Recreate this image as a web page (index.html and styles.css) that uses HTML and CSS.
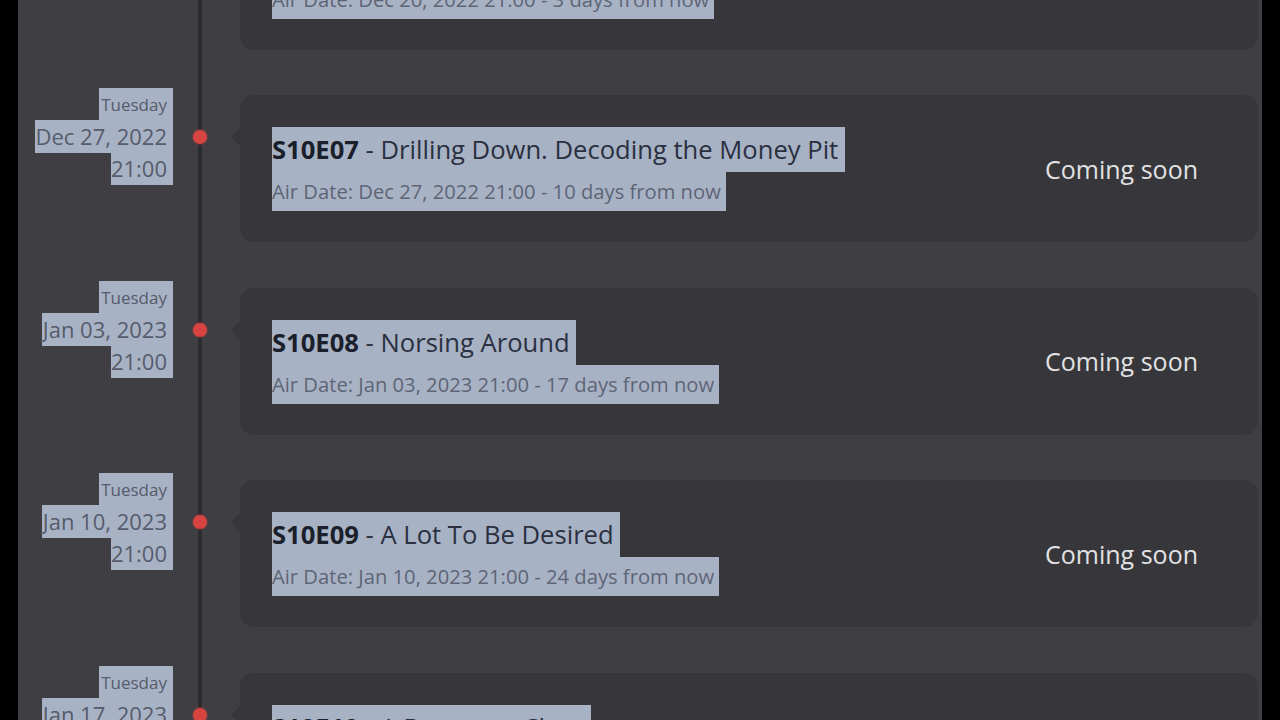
FILE: index.html
```html
<!DOCTYPE html>
<html>
<head>
<meta charset="utf-8">
<link rel="stylesheet" href="styles.css">
</head>
<body>
<div class="page">
  <div class="list">
    <div class="row">
      <div class="when">
        <span class="hl day">Tuesday</span>
        <span class="hl date">Dec 20, 2022</span>
        <span class="hl time">21:00</span>
      </div>
      <div class="axis"><span class="dot"></span></div>
      <div class="card">
        <div class="info">
          <div class="hl title"><b>S10E06</b> - The Dust Settles </div>
          <div class="hl air">Air Date: Dec 20, 2022 21:00 - 3 days from now</div>
        </div>
        <div class="status">Coming soon</div>
      </div>
    </div>
    <div class="row">
      <div class="when">
        <span class="hl day">Tuesday</span>
        <span class="hl date">Dec 27, 2022</span>
        <span class="hl time">21:00</span>
      </div>
      <div class="axis"><span class="dot"></span></div>
      <div class="card">
        <div class="info">
          <div class="hl title"><b>S10E07</b> - Drilling Down. Decoding the Money Pit </div>
          <div class="hl air">Air Date: Dec 27, 2022 21:00 - 10 days from now</div>
        </div>
        <div class="status">Coming soon</div>
      </div>
    </div>
    <div class="row">
      <div class="when">
        <span class="hl day">Tuesday</span>
        <span class="hl date">Jan 03, 2023</span>
        <span class="hl time">21:00</span>
      </div>
      <div class="axis"><span class="dot"></span></div>
      <div class="card">
        <div class="info">
          <div class="hl title"><b>S10E08</b> - Norsing Around </div>
          <div class="hl air">Air Date: Jan 03, 2023 21:00 - 17 days from now</div>
        </div>
        <div class="status">Coming soon</div>
      </div>
    </div>
    <div class="row">
      <div class="when">
        <span class="hl day">Tuesday</span>
        <span class="hl date">Jan 10, 2023</span>
        <span class="hl time">21:00</span>
      </div>
      <div class="axis"><span class="dot"></span></div>
      <div class="card">
        <div class="info">
          <div class="hl title"><b>S10E09</b> - A Lot To Be Desired </div>
          <div class="hl air">Air Date: Jan 10, 2023 21:00 - 24 days from now</div>
        </div>
        <div class="status">Coming soon</div>
      </div>
    </div>
    <div class="row">
      <div class="when">
        <span class="hl day">Tuesday</span>
        <span class="hl date">Jan 17, 2023</span>
        <span class="hl time">21:00</span>
      </div>
      <div class="axis"><span class="dot"></span></div>
      <div class="card">
        <div class="info">
          <div class="hl title"><b>S10E10</b> - A Dream to Clear </div>
          <div class="hl air">Air Date: Jan 17, 2023 21:00 - 31 days from now</div>
        </div>
        <div class="status">Coming soon</div>
      </div>
    </div>
  </div>
</div>
</body>
</html>
```

FILE: styles.css
```css
html, body {
  margin: 0;
  padding: 0;
  background: #000;
}
body {
  font-family: "Open Sans", "Noto Sans", sans-serif;
  width: 1280px;
  height: 720px;
  overflow: hidden;
}
.page {
  margin: 0 18px;
  height: 720px;
  overflow: hidden;
  background: #3f3e43;
  padding-right: 4px;
}
.list {
  margin-top: -97.5px;
}
.row {
  display: grid;
  grid-template-columns: 152px 54px 1fr;
  padding-left: 3px;
}
.when {
  display: flex;
  flex-direction: column;
  align-items: flex-end;
  margin-top: -7px;
}
.hl {
  background: #a8b2c5;
}
.when .hl {
  display: block;
  padding-right: 6px;
  color: #565c6b;
}
.day {
  font-size: 17px;
  height: 32px;
  line-height: 34px;
  padding-left: 2px;
}
.date {
  font-size: 22px;
  height: 33px;
  line-height: 33px;
  padding-left: 1px;
}
.time {
  font-size: 22px;
  height: 32px;
  line-height: 31px;
}
.axis {
  display: flex;
  justify-content: center;
  align-items: flex-start;
  background: linear-gradient(#2b2a2f, #2b2a2f) center / 4px 100% no-repeat;
}
.dot {
  width: 14px;
  height: 14px;
  margin-top: 35px;
  border-radius: 50%;
  background: #d8443f;
  box-shadow: 0 0 3px rgba(216, 68, 63, 0.6);
}
.card {
  position: relative;
  height: 147px;
  margin: 0 0 45.5px 13px;
  box-sizing: border-box;
  background: #37363b;
  border-radius: 14px;
  padding: 32px 60px 0 32px;
  display: flex;
  justify-content: space-between;
}
.card::before {
  content: "";
  position: absolute;
  left: -9px;
  top: 33px;
  border-style: solid;
  border-width: 9px 9px 9px 0;
  border-color: transparent #37363b transparent transparent;
}
.info {
  display: flex;
  flex-direction: column;
  align-items: flex-start;
}
.title {
  font-size: 25.6px;
  height: 45px;
  line-height: 45px;
  color: #2a3040;
  white-space: pre;
}
.title b {
  font-weight: 700;
  color: #1b1f2b;
}
.air {
  font-size: 20.2px;
  height: 39px;
  line-height: 39px;
  color: #5e6575;
  padding-right: 5px;
}
.status {
  align-self: center;
  margin-top: -32px;
  font-size: 25px;
  color: #e2e2e4;
}
```
